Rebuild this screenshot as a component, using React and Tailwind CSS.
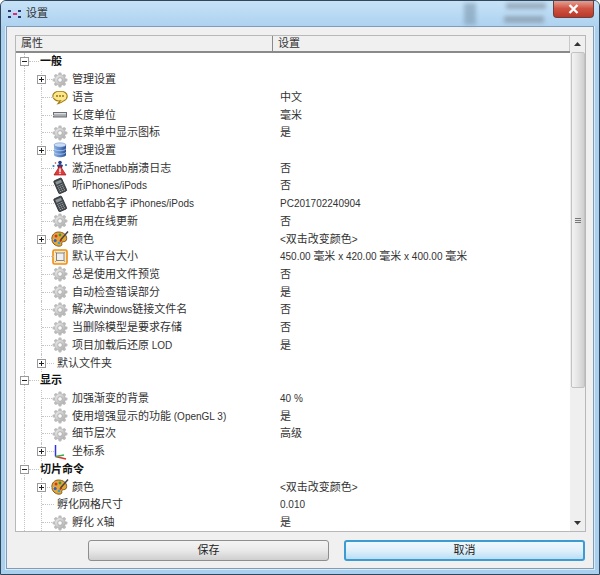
const SANS = "font-['Liberation_Sans','Noto_Sans_CJK_SC',sans-serif]";

function Mixed({ text }) {
  const parts = String(text || "").split(/([\u0000-\u007f]+)/).filter(Boolean);
  return parts.map((p, i) =>
    /^[\u0000-\u007f]+$/.test(p) ? (
      <span key={i} className="text-[10px]">{p}</span>
    ) : (
      <span key={i}>{p}</span>
    )
  );
}

function Gear() {
  const teeth = [0, 45, 90, 135, 180, 225, 270, 315];
  return (
    <svg width="16" height="16" viewBox="0 0 16 16">
      <defs>
        <linearGradient id="gearfill" x1="0" y1="0" x2="1" y2="1">
          <stop offset="0" stopColor="#f0f0f0" />
          <stop offset="1" stopColor="#aaaaaa" />
        </linearGradient>
      </defs>
      {teeth.map((a) => (
        <rect key={a} x="6.4" y="0.6" width="3.2" height="3.4" rx="0.8" fill="#bdbdbd" transform={`rotate(${a} 8 8)`} />
      ))}
      <circle cx="8" cy="8" r="5.4" fill="url(#gearfill)" stroke="#b0b0b0" strokeWidth="0.6" />
      <circle cx="8" cy="8" r="2.3" fill="#fafafa" stroke="#a0a0a0" strokeWidth="0.7" />
    </svg>
  );
}

function Bubble() {
  return (
    <svg width="16" height="16" viewBox="0 0 16 16">
      <path d="M8 2C3.800 2 .8 4.200 .8 7s3 5 6 5c.6 0 1 0 1.500-.1L6 14.600c2.600-.6 4.600-1.600 6-2.900 2-.9 3.200-2.600 3.200-4.700C15.200 4.200 12.200 2 8 2z" fill="#fbe68a" stroke="#a37c10" strokeWidth="1.100" />
      <circle cx="5" cy="7" r="0.9" fill="#8a6a10" />
      <circle cx="8" cy="7" r="0.9" fill="#8a6a10" />
      <circle cx="11" cy="7" r="0.9" fill="#8a6a10" />
    </svg>
  );
}

function Ruler() {
  return (
    <svg width="16" height="16" viewBox="0 0 16 16">
      <rect x="1.500" y="5.500" width="13" height="4.500" fill="#a9acb0" stroke="#6c6f74" strokeWidth="1" />
      <rect x="2" y="6" width="12" height="1.200" fill="#dcdde0" />
    </svg>
  );
}

function Database() {
  return (
    <svg width="16" height="16" viewBox="0 0 16 16">
      <defs>
        <linearGradient id="dbfill" x1="0" y1="0" x2="1" y2="0">
          <stop offset="0" stopColor="#8fb4e4" />
          <stop offset="0.5" stopColor="#5a86c8" />
          <stop offset="1" stopColor="#2c4f94" />
        </linearGradient>
      </defs>
      <path d="M2 3v10c0 1.200 2.700 2.200 6 2.200s6-1 6-2.200V3z" fill="url(#dbfill)" />
      <ellipse cx="8" cy="3" rx="6" ry="2.200" fill="#c9dcf4" stroke="#5a7eb8" strokeWidth="0.5" />
      <path d="M2 6.500c0 1.200 2.700 2.200 6 2.200s6-1 6-2.200M2 10c0 1.200 2.700 2.200 6 2.200s6-1 6-2.200" fill="none" stroke="#cfe0f5" strokeWidth="0.7" />
    </svg>
  );
}

function Crash() {
  return (
    <svg width="18" height="16" viewBox="0 0 18 16">
      <circle cx="9" cy="2.500" r="1.800" fill="#27408b" />
      <circle cx="2.500" cy="6" r="1.100" fill="#2f7fc8" />
      <circle cx="15" cy="5" r="1.100" fill="#2f7fc8" />
      <circle cx="4.500" cy="3" r="0.800" fill="#c0392b" />
      <path d="M6 5l3-1 3 1-1 3H7z" fill="#27408b" />
      <path d="M9 5.500l6 9.500H3z" fill="#e23b3b" stroke="#a51616" strokeWidth="0.7" />
      <path d="M9 8.500v3.500" stroke="#fff" strokeWidth="1.500" />
      <circle cx="9" cy="13.400" r="0.800" fill="#fff" />
    </svg>
  );
}

function Device() {
  return (
    <svg width="18" height="18" viewBox="0 0 18 18">
      <g transform="rotate(-24 9 9)">
        <rect x="5" y="2" width="8.500" height="14" rx="1" fill="#43484c" stroke="#2a2e31" strokeWidth="0.8" />
        <rect x="6.300" y="3.500" width="6" height="3" fill="#8b979b" />
        <path d="M6.300 8.300h6M6.300 10.300h6M6.300 12.300h6M6.300 14.300h6" stroke="#b3babd" strokeWidth="0.8" strokeDasharray="1.400 0.800" />
      </g>
    </svg>
  );
}

function Palette() {
  return (
    <svg width="18" height="18" viewBox="0 0 18 18">
      <path d="M7.500 2C3.500 2 .8 5 .8 8.800c0 4.200 3.400 7.400 7.400 7.400 2 0 3-1 2.600-2.200-.4-1.300.2-2.300 1.700-2.300 2 0 3.200-1.200 3.200-3.300C15.700 4.800 12.200 2 7.500 2z" fill="#e2a63a" stroke="#7a4f10" strokeWidth="0.9" />
      <circle cx="5" cy="6" r="1.500" fill="#d8342a" />
      <circle cx="9" cy="5" r="1.400" fill="#3d9a3a" />
      <circle cx="4.200" cy="10.500" r="1.500" fill="#2f5fc8" />
      <circle cx="8" cy="13" r="1.300" fill="#3aa0c8" />
      <path d="M17 1.500L9.500 10" stroke="#444" strokeWidth="1.500" />
      <path d="M10.200 9l-2 2 1.500 1 1.500-2z" fill="#b03020" />
    </svg>
  );
}

function Box() {
  return (
    <svg width="16" height="16" viewBox="0 0 16 16">
      <rect x="1" y="1" width="14" height="14" rx="1.500" fill="#fde9c4" stroke="#e98f16" strokeWidth="1.600" />
      <rect x="4.500" y="4" width="7.500" height="7.500" fill="#eef0f2" stroke="#6d6d6d" strokeWidth="0.8" />
      <path d="M4.500 4L3 2.800M12 4l1-1.200M4.500 11.500L3 13M12 11.500l1 1.500" stroke="#8a7a60" strokeWidth="0.7" />
    </svg>
  );
}

function Axes() {
  return (
    <svg width="16" height="16" viewBox="0 0 16 16">
      <path d="M3.500 12.500V1" stroke="#2f36d8" strokeWidth="1.500" />
      <path d="M3.500 12.500L14 15" stroke="#e0342c" strokeWidth="1.500" />
      <path d="M3.500 12.500L12 11" stroke="#30b050" strokeWidth="1.500" />
    </svg>
  );
}

const ICONS = {
  gear: <Gear />,
  bubble: <Bubble />,
  ruler: <Ruler />,
  db: <Database />,
  crash: <Crash />,
  device: <Device />,
  palette: <Palette />,
  box: <Box />,
  axes: <Axes />,
};

const ROWS = [
  { head: "一般" },
  { icon: "gear", name: "管理设置", plus: true },
  { icon: "bubble", name: "语言", value: "中文" },
  { icon: "ruler", name: "长度单位", value: "毫米" },
  { icon: "gear", name: "在菜单中显示图标", value: "是" },
  { icon: "db", name: "代理设置", plus: true },
  { icon: "crash", name: "激活netfabb崩溃日志", value: "否" },
  { icon: "device", name: "听iPhones/iPods", value: "否" },
  { icon: "device", name: "netfabb名字 iPhones/iPods", value: "PC201702240904" },
  { icon: "gear", name: "启用在线更新", value: "否" },
  { icon: "palette", name: "颜色", value: "<双击改变颜色>", plus: true },
  { icon: "box", name: "默认平台大小", value: "450.00 毫米 x 420.00 毫米 x 400.00 毫米" },
  { icon: "gear", name: "总是使用文件预览", value: "否" },
  { icon: "gear", name: "自动检查错误部分", value: "是" },
  { icon: "gear", name: "解决windows链接文件名", value: "否" },
  { icon: "gear", name: "当删除模型是要求存储", value: "否" },
  { icon: "gear", name: "项目加载后还原 LOD", value: "是" },
  { name: "默认文件夹", plus: true },
  { head: "显示" },
  { icon: "gear", name: "加强渐变的背景", value: "40 %" },
  { icon: "gear", name: "使用增强显示的功能 (OpenGL 3)", value: "是" },
  { icon: "gear", name: "细节层次", value: "高级" },
  { icon: "axes", name: "坐标系", plus: true },
  { head: "切片命令" },
  { icon: "palette", name: "颜色", value: "<双击改变颜色>", plus: true },
  { name: "孵化网格尺寸", value: "0.010" },
  { icon: "gear", name: "孵化 X轴", value: "是" },
];

function Expander({ minus }) {
  return (
    <span className="w-[9px] h-[9px] border border-[#9a9a9a] bg-white flex items-center justify-center relative shrink-0">
      <span className="w-[5px] h-px bg-[#222]" />
      {!minus && <span className="absolute w-px h-[5px] bg-[#222]" />}
    </span>
  );
}

function HeadRow({ text }) {
  return (
    <div className="h-[17.73px] flex items-center shrink-0">
      <div className="w-[8px] shrink-0" />
      <div className="relative h-full w-[16px] shrink-0 flex items-center border-l border-dotted border-[#c4c4c4]">
        <div className="w-[10px] ml-[4px] border-t border-dotted border-[#c4c4c4]" />
        <span className="absolute left-[-5px]"><Expander minus /></span>
      </div>
      <span className="font-bold text-[11px] text-[#111]">{text}</span>
    </div>
  );
}

function ItemRow({ row }) {
  return (
    <div className="h-[17.73px] flex items-center shrink-0">
      <div className="w-[8px] shrink-0" />
      <div className="h-full w-[17px] shrink-0 border-l border-dotted border-[#c4c4c4]" />
      <div className="relative h-full w-[16px] shrink-0 flex items-center border-l border-dotted border-[#c4c4c4]">
        <div className="w-[12px] border-t border-dotted border-[#c4c4c4]" />
        {row.plus && <span className="absolute left-[-5px]"><Expander /></span>}
      </div>
      {row.icon ? (
        <div className="w-[16px] ml-[-5px] mr-[4px] h-full flex items-center justify-center shrink-0 bg-white">
          <span className="shrink-0 flex">{ICONS[row.icon]}</span>
        </div>
      ) : null}
      <span className="text-[11px] text-[#333] whitespace-nowrap shrink-0"><Mixed text={row.name} /></span>
      <span className="absolute left-[264px] text-[11px] text-[#333] whitespace-nowrap"><Mixed text={row.value} /></span>
    </div>
  );
}

export default function App() {
  return (
    <div className={`w-[600px] h-[575px] flex flex-col overflow-hidden rounded-t-[6px] bg-[#a9d0ee] border border-[#33475a] ${SANS} leading-none`}>
      <div className="h-[25px] shrink-0 flex items-center relative bg-gradient-to-b from-[#c6e2f7] to-[#aed2f0]">
        <svg className="ml-[7px]" width="14" height="10" viewBox="0 0 14 10">
          <rect x="0" y="1" width="3" height="2" fill="#2a3a70" />
          <rect x="0" y="7" width="3" height="2" fill="#2a3a70" />
          <rect x="5" y="4" width="4" height="2" fill="#e0287a" />
          <rect x="10" y="1" width="3" height="2" fill="#2a3a70" />
          <rect x="10" y="7" width="3" height="2" fill="#2a3a70" />
        </svg>
        <span className="ml-[4px] text-[11px] text-[#333]">设置</span>
        <div className="absolute left-[463px] top-[2px] w-[12px] h-[22px] bg-[#7d99b0] opacity-60 blur-[2px]" />
        <div className="absolute left-[505px] top-[2px] w-[40px] h-[6px] bg-[#7d8a98] opacity-60 blur-[2px]" />
        <div className="absolute left-[503px] top-[15px] w-[40px] h-[7px] bg-[#7d8a98] opacity-60 blur-[2px]" />
        <div className="absolute left-[552px] top-[-1px] w-[41px] h-[18px] rounded-b-[4px] bg-gradient-to-b from-[#e8a79c] via-[#cf5343] to-[#b9382a] border border-[#6e3f3a] border-t-0 flex items-center justify-center">
          <svg width="11" height="10" viewBox="0 0 11 10">
            <path d="M1.500 1l8 8M9.500 1l-8 8" stroke="#fff" strokeWidth="2.400" />
          </svg>
        </div>
      </div>

      <div className="flex-1 mx-[5px] mb-[5px] min-h-0 flex flex-col bg-[#f0f0f0] border border-[#7f9db9] shadow-[0_0_0_1px_#dceaf6]">
        <div className="mt-[8px] ml-[8px] mr-[7px] h-[497px] flex flex-col border border-[#b8b8b8] bg-white relative overflow-hidden shrink-0">
          <div className="flex flex-1 min-h-0">
            <div className="w-[554px] flex flex-col relative shrink-0 min-w-0">
              <div className="h-[17px] shrink-0 flex items-center bg-[#f0f0f0] border-b-2 border-[#8a8a8a] text-[11px] text-[#333]">
                <div className="w-[256px] pl-[5px] shrink-0">属性</div>
                <div className="h-full border-l border-[#8a8a8a] pl-[5px] flex items-center flex-1 border-r border-r-[#c8c8c8]">设置</div>
              </div>
              <div className="flex-1 flex flex-col overflow-hidden relative">
                {ROWS.map((r, i) => (r.head ? <HeadRow key={i} text={r.head} /> : <ItemRow key={i} row={r} />))}
              </div>
            </div>
            <div className="w-[15px] shrink-0 flex flex-col bg-[#efefef] items-center">
              <div className="h-[16px] flex items-center justify-center shrink-0">
                <svg width="7" height="4" viewBox="0 0 7 4"><path d="M3.500 0L7 4H0z" fill="#333" /></svg>
              </div>
              <div className="w-[14px] h-[336px] shrink-0 bg-gradient-to-r from-[#f3f3f3] via-[#e4e4e4] to-[#cfcfcf] border border-[#c2c2c2] rounded-[2px] flex flex-col gap-[1px] items-center justify-center">
                <span className="w-[6px] h-px bg-[#777]" />
                <span className="w-[6px] h-px bg-[#777]" />
                <span className="w-[6px] h-px bg-[#777]" />
              </div>
              <div className="flex-1" />
              <div className="h-[16px] flex items-center justify-center shrink-0">
                <svg width="7" height="4" viewBox="0 0 7 4"><path d="M3.500 4L7 0H0z" fill="#333" /></svg>
              </div>
            </div>
          </div>
        </div>
        <div className="flex-1 flex items-center justify-end pr-[8px] gap-[15px] text-[11px] text-[#222]">
          <div className="w-[241px] h-[21px] flex items-center justify-center rounded-[3px] border border-[#8e8e8e] bg-gradient-to-b from-[#f4f4f4] via-[#e9e9e9] to-[#cfcfcf]">保存</div>
          <div className="w-[241px] h-[21px] flex items-center justify-center rounded-[3px] border-2 border-[#3c9bd0] bg-gradient-to-b from-[#eef8fe] via-[#dff0fb] to-[#b9dff5]">取消</div>
        </div>
      </div>
    </div>
  );
}
